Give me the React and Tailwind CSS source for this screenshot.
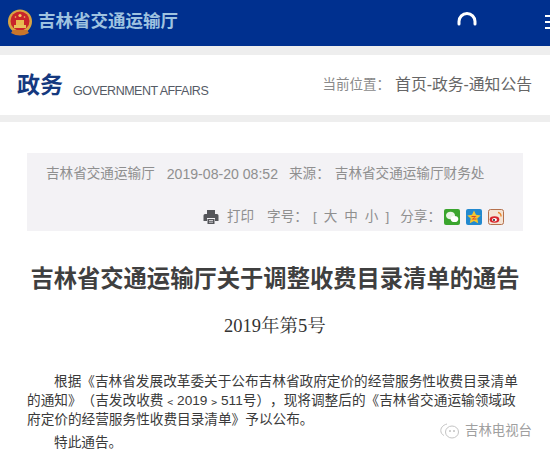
const cjk = { fontFamily: '"Liberation Sans", "Noto Sans CJK SC", sans-serif' };
const serif = { fontFamily: '"Liberation Serif", "Noto Serif CJK SC", "Noto Sans CJK SC", serif' };

function Emblem() {
  return (
    <svg width="26" height="28" viewBox="0 0 26 28" className="shrink-0">
      <circle cx="13" cy="12.5" r="12" fill="#d9a441" />
      <circle cx="13" cy="12" r="9.5" fill="#c8242b" />
      <path d="M7 16h12v3H7z" fill="#e8c15a" />
      <path d="M9 11h8v5H9z" fill="#e8b94f" />
      <circle cx="13" cy="6.5" r="1.6" fill="#f2d060" />
      <circle cx="8.5" cy="8" r=".8" fill="#f2d060" />
      <circle cx="17.500" cy="8" r=".8" fill="#f2d060" />
      <path d="M4 24q9 5 18 0l-2-3H6z" fill="#c9752b" />
    </svg>
  );
}

function Printer() {
  return (
    <svg width="16" height="16" viewBox="0 0 16 16" className="shrink-0">
      <path d="M4 1h8v4H4z" fill="#55565a" />
      <path d="M2 5h12a1.500 1.500 0 0 1 1.500 1.500V12H12V9H4v3H.500V6.500A1.500 1.500 0 0 1 2 5z" fill="#55565a" />
      <path d="M4.500 10h7v5h-7z" fill="#55565a" />
      <path d="M6 11h4v.8H6zM6 12.800h4v.8H6z" fill="#f3f2f5" />
    </svg>
  );
}

function WeChat() {
  return (
    <svg width="16" height="16" viewBox="0 0 16 16" className="shrink-0">
      <rect width="16" height="16" rx="2" fill="#3aa52d" />
      <ellipse cx="6.500" cy="6.500" rx="4.500" ry="3.800" fill="#e8f5e4" />
      <ellipse cx="10.500" cy="10" rx="3.800" ry="3.100" fill="#ffffff" />
    </svg>
  );
}

function QZone() {
  return (
    <svg width="16" height="16" viewBox="0 0 16 16" className="shrink-0">
      <rect width="16" height="16" rx="2" fill="#2289cf" />
      <path d="M8 1.500l2 4.300 4.700.6-3.400 3.200.9 4.600L8 11.900l-4.200 2.300.9-4.600L1.300 6.400 6 5.800z" fill="#f5c52c" />
      <path d="M5.500 7h5l-3 2.500h3v1h-5l3-2.500h-3z" fill="#d9482b" />
    </svg>
  );
}

function Weibo() {
  return (
    <svg width="16" height="16" viewBox="0 0 16 16" className="shrink-0">
      <rect x=".500" y=".500" width="15" height="15" rx="2" fill="#f4e3d4" stroke="#b5714d" />
      <ellipse cx="6.500" cy="10.500" rx="4.800" ry="3.300" fill="#d8232a" />
      <ellipse cx="6.500" cy="10.800" rx="2.500" ry="1.800" fill="#ffffff" />
      <circle cx="6" cy="11" r="1" fill="#222222" />
      <path d="M10 3.500a3.500 3.500 0 0 1 3 4" fill="none" stroke="#e8852b" strokeWidth="1.400" />
    </svg>
  );
}

function WatermarkBubbles() {
  return (
    <svg width="24" height="20" viewBox="0 0 24 20" className="shrink-0" fill="none" stroke="#c4c4c4" strokeWidth="1">
      <path d="M9 3c-4 1-7 4-6 8 .5 2 2 3 3 3.500" />
      <ellipse cx="14" cy="11" rx="6.500" ry="6" fill="#ffffff" />
      <circle cx="12" cy="10" r=".6" fill="#bdbdbd" />
      <circle cx="16" cy="10" r=".6" fill="#bdbdbd" />
    </svg>
  );
}

function Spinner() {
  return (
    <svg width="20" height="14" viewBox="0 0 20 14" className="shrink-0">
      <path d="M2 12.500V10a8 8 0 0 1 16 0v2.500" fill="none" stroke="#ffffff" strokeWidth="3" strokeLinecap="round" transform="translate(0 -.5)" />
    </svg>
  );
}

export default function App() {
  return (
    <div className="w-[550px] h-[456px] overflow-hidden bg-white relative" style={cjk}>
      {/* top bar */}
      <div className="h-[46px] bg-[#00308f] flex items-center pl-[7px] relative">
        <Emblem />
        <span className="ml-[5px] -mt-[3px] text-[17.500px] leading-none font-bold text-[#9fc3e0]">吉林省交通运输厅</span>
        <div className="ml-auto mr-[73px] -mt-[8px]">
          <Spinner />
        </div>
        <div className="absolute right-0 top-[15px] w-[5px] flex flex-col gap-[4px]">
          <div className="h-[2px] bg-white" />
          <div className="h-[2px] bg-white" />
          <div className="h-[2px] bg-white" />
        </div>
      </div>
      <div className="h-[9px] bg-[#eeeeee]" />

      {/* section title */}
      <div className="h-[60px] flex items-center justify-between pl-[17px] pr-[18px]">
        <div className="flex items-end">
          <span className="text-[23px] leading-none font-bold text-[#15397f]">政务</span>
          <span className="ml-[10px] -mb-[1px] text-[12.500px] leading-none text-[#555b66] tracking-[-.5px]">GOVERNMENT AFFAIRS</span>
        </div>
        <div className="flex items-center">
          <span className="text-[13.500px] text-[#8a8a8a]">当前位置：</span>
          <span className="ml-[5px] text-[15.800px] text-[#666666]">首页-政务-通知公告</span>
        </div>
      </div>
      <div className="h-[7px] bg-[#eeeeee]" />

      {/* meta box */}
      <div className="mx-[27px] mt-[31px] h-[78px] bg-[#f3f2f5] px-[19px] text-[13.600px] text-[#8f8f8f]">
        <div className="pt-[6px] flex h-[37px] items-center">
          <span>吉林省交通运输厅</span>
          <span className="ml-[12px] text-[14.100px]">2019-08-20 08:52</span>
          <span className="ml-[11px]">来源：</span>
          <span className="ml-[5px]">吉林省交通运输厅财务处</span>
        </div>
        <div className="mt-[19px] flex items-center justify-end h-[16px]">
          <Printer />
          <span className="ml-[8px]">打印</span>
          <span className="ml-[13px]">字号：</span>
          <span className="ml-[5px] tracking-[7px]">[大中小]</span>
          <span className="ml-[4px]">分享：</span>
          <span className="ml-[3px] flex gap-[6px]">
            <WeChat />
            <QZone />
            <Weibo />
          </span>
        </div>
      </div>

      {/* article */}
      <h1 className="mt-[33px] text-center text-[23.300px] leading-[30px] font-bold text-[#3f3f3f]">吉林省交通运输厅关于调整收费目录清单的通告</h1>
      <p className="mt-[20px] text-center text-[18.500px] leading-[24px] text-[#333333]" style={serif}>2019年第5号</p>

      <div className="mt-[34px] px-[27px] text-[13.650px] leading-[19px] text-[#3a3a3a] [text-spacing-trim:space-all]">
        <span className="block pl-[27px] whitespace-nowrap">根据《吉林省发展改革委关于公布吉林省政府定价的经营服务性收费目录清单</span>
        <span className="block whitespace-nowrap">的通知》（吉发改收费﹤2019﹥511号），现将调整后的《吉林省交通运输领域政</span>
        <span className="block w-fit whitespace-nowrap">府定价的经营服务性收费目录清单》予以公布。</span>
        <span className="block w-fit pl-[27px] mt-[4px]">特此通告。</span>
      </div>

      {/* watermark */}
      <div className="absolute left-[438px] top-[421px] flex items-center gap-[3px] text-[13.400px] text-[#a0a0a0]">
        <WatermarkBubbles />
        <span>吉林电视台</span>
      </div>
    </div>
  );
}
